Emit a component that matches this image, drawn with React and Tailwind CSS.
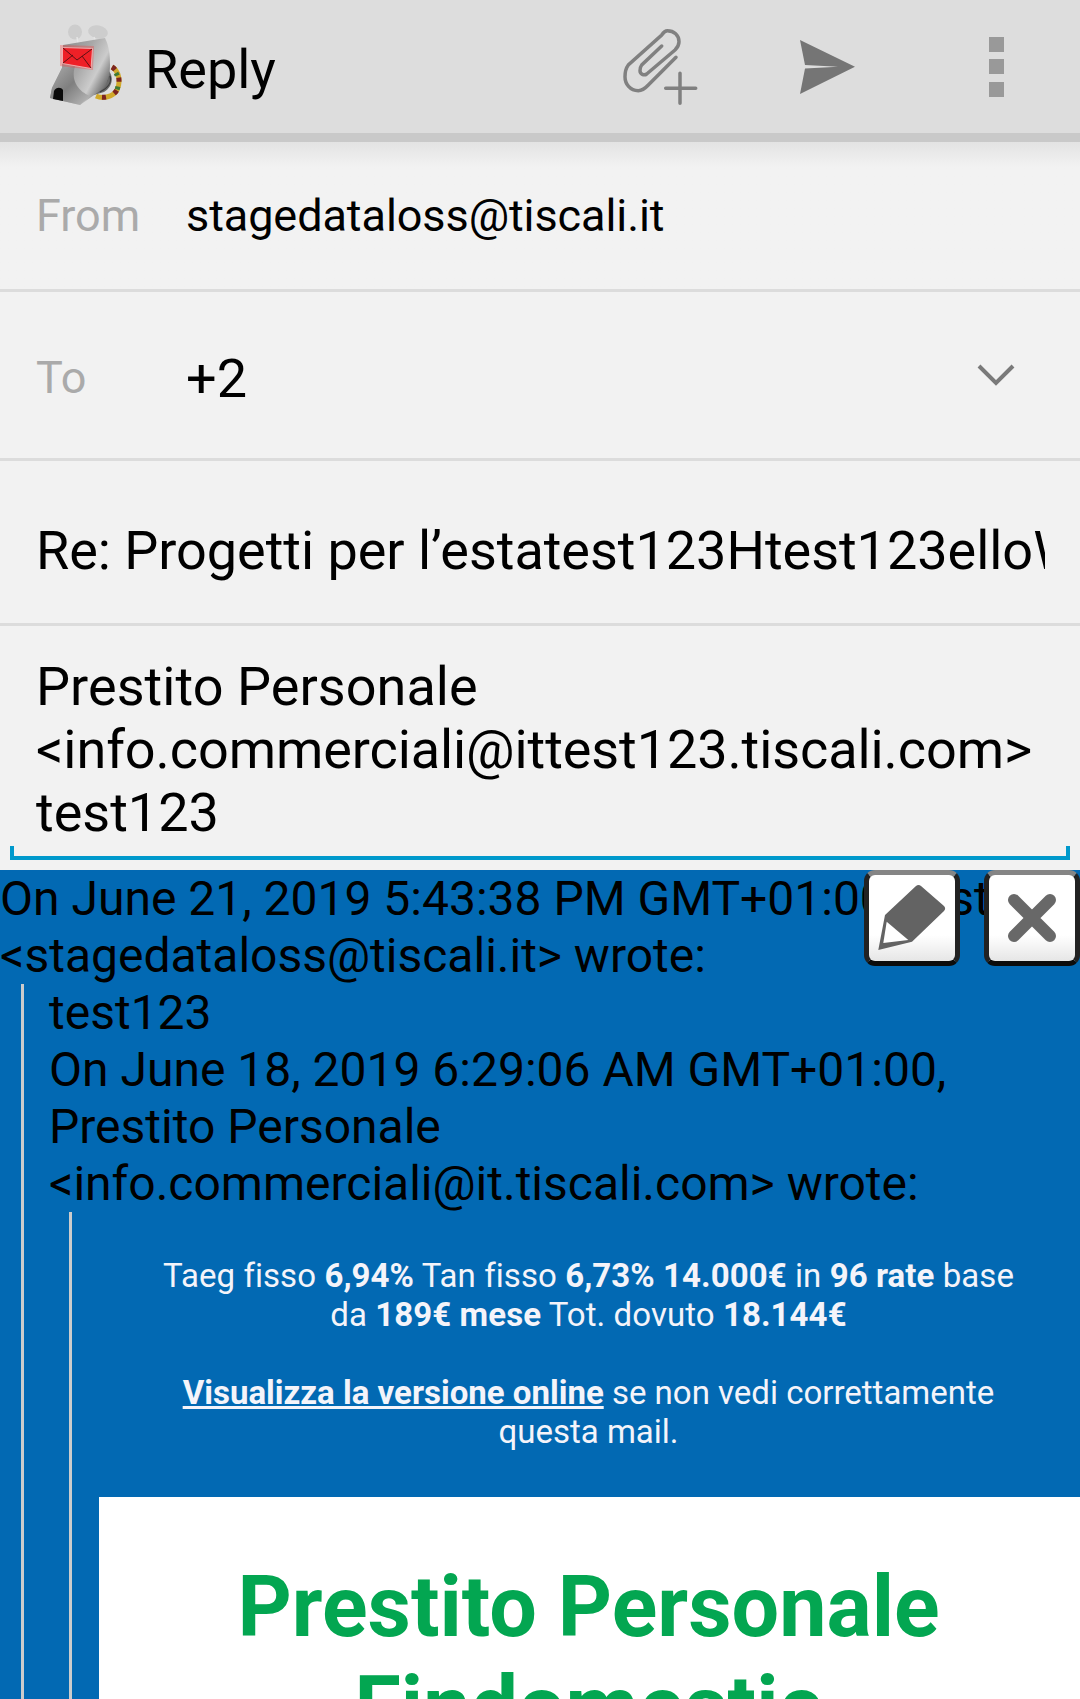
import React from "react";

const K9Logo = () => (
  <svg width="76" height="90" viewBox="0 0 76 90" className="shrink-0">
    <defs>
      <linearGradient id="k9Head" x1="0" y1="0" x2="1" y2="0.6">
        <stop offset="0" stopColor="#808080" />
        <stop offset="0.55" stopColor="#a8a8a8" />
        <stop offset="0.8" stopColor="#cccccc" />
        <stop offset="1" stopColor="#6e6e6e" />
      </linearGradient>
      <linearGradient id="k9Snout" x1="0" y1="0" x2="1" y2="1">
        <stop offset="0" stopColor="#adadad" />
        <stop offset="0.5" stopColor="#7f7f7f" />
        <stop offset="1" stopColor="#bdbdbd" />
      </linearGradient>
    </defs>
    {/* ears */}
    <ellipse cx="29" cy="10" rx="7" ry="7.5" fill="#cdcdcd" />
    <ellipse cx="52" cy="10" rx="10" ry="6.5" fill="#cdcdcd" transform="rotate(10 52 10)" />
    <path d="M31 15 L32 21 M48 15 L50 21" stroke="#e6e6e6" strokeWidth="1.5" />
    {/* neck and collar */}
    <path d="M60 46 C68 52 68 64 58 70 L48 73 L50 58 Z" fill="#6a6a6a" />
    <path d="M64 54 C66 60 62 66 54 70 M61 52 C63 58 60 62 52 67" fill="none" stroke="#3d3d3d" strokeWidth="1.3" />
    <path d="M66 45 C73 49 75 60 71 68 C67 75 57 77 50 74" fill="none" stroke="#d1a92a" strokeWidth="5" />
    <path d="M66 45 C73 49 75 60 71 68 C67 75 57 77 50 74" fill="none" stroke="#7c2420" strokeWidth="5" strokeDasharray="4 9" />
    <path d="M70 51 C73 56 73 62 71 68" fill="none" stroke="#3f7a35" strokeWidth="5" strokeDasharray="3 11" />
    <ellipse cx="59" cy="83" rx="3.5" ry="5" fill="#dddddd" />
    {/* head */}
    <path d="M17 23 L59 16 C63 24 64 32 64 43 C64 52 62 60 58 66 L34 83 L4 76 L6 66 L16 46 Z" fill="url(#k9Head)" />
    <path d="M16 46 L6 66 L4 76 L34 83 L44 74 C34 70 24 60 29 44 Z" fill="url(#k9Snout)" />
    <path d="M7 77 L8 69 C10 65 15 65 17 68 L17 79 Z" fill="#0a0a0a" />
    {/* glowing envelope eye */}
    <path d="M14 23 L48 24 L47 48 L14 44 Z" fill="#ff3030" opacity="0.3" />
    <path d="M16.5 25.5 L46.5 26.5 L45 46.5 L16.5 41.5 Z" fill="#ee2027" stroke="#f6c0c0" strokeWidth="0.8" />
    <path d="M17 26 L31 38 L46 27 M17 41 L27 33 M45 46 L36 34" fill="none" stroke="#5e1014" strokeWidth="1" />
  </svg>
);

const ClipPlus = () => (
  <svg width="80" height="80" viewBox="0 0 80 80" fill="none" stroke="#808080" strokeLinecap="round" className="mt-[3px]">
    <path
      d="M56 29.3 L28.3 57 C25 60.5 22 62.7 18.3 62.7 C10 62.7 5 56 5 48.7 C5 44 6 40 8.3 37 L41.7 7 C43 5 45 2.7 47.3 2.7 C54 2.7 59 7 59 13.7 C59 17 57.5 19.5 55 22 L26.7 46 C24 48 20 46 20 42.7 C20 40.5 20.5 38.5 21.7 37 L41.7 18"
      strokeWidth="3.5"
    />
    <path d="M60 45.3 V75.3 M45.7 60.3 H75.7" strokeWidth="3.5" />
  </svg>
);

const SendIcon = () => (
  <svg width="60" height="60" viewBox="0 0 60 60">
    <path d="M2 3 L57 29.7 L2 57 L7 31.5 L40 29.7 L7 28 Z" fill="#757575" />
  </svg>
);

const MoreIcon = () => (
  <div className="flex flex-col">
    <div className="mb-[7px] h-[15px] w-[15px] bg-[#999999]" />
    <div className="mb-[8px] h-[15px] w-[15px] bg-[#999999]" />
    <div className="h-[15px] w-[15px] bg-[#999999]" />
  </div>
);

const FloatButton = ({ children }) => (
  <div className="flex h-[96px] w-[96px] items-center justify-center rounded-[11px] border-[5px] border-x-[#222222] border-t-[#858585] border-b-[#0c0c0c] bg-gradient-to-b from-white from-70% to-[#e6e6e6]">
    {children}
  </div>
);

const Row = ({ label, value, big, chevron, height }) => (
  <div className={`${height} flex items-center border-b-[3px] border-[#dcdcdc] pl-[36px] pr-[65px]`}>
    <span className={`w-[150px] text-[45px] text-[#aaaaaa] ${big ? "pt-[5px]" : ""}`}>{label}</span>
    <span className={`flex-1 text-black ${big ? "pt-[6px] text-[54px]" : "text-[45px] tracking-[-0.08px]"}`}>{value}</span>
    {chevron && (
      <svg width="38" height="22" viewBox="0 0 38 22" fill="none" stroke="#7a7a7a" strokeWidth="4">
        <path d="M2 2 L19 19 L36 2" />
      </svg>
    )}
  </div>
);

const App = () => {
  return (
    <div className="relative h-[1699px] w-[1080px] overflow-hidden bg-[#f2f2f2] font-['Roboto',sans-serif]">
      {/* Action bar */}
      <div className="flex h-[133px] items-center bg-[#dddddd] pl-[46px]">
        <K9Logo />
        <span className="ml-[23px] pt-[6px] text-[54px] text-black">Reply</span>
        <div className="ml-auto flex items-center">
          <ClipPlus />
          <div className="ml-[98px]"><SendIcon /></div>
          <div className="ml-[131px] mr-[76px]"><MoreIcon /></div>
        </div>
      </div>
      <div className="h-[9px] bg-[#c9c9c9]" />

      <div className="bg-gradient-to-b from-[#e3e3e3] to-[#f2f2f2] to-[25px]">
        <Row label="From" value="stagedataloss@tiscali.it" height="h-[150px]" />
      </div>
      <Row label="To" value="+2" big chevron height="h-[169px]" />

      {/* Subject */}
      <div className="flex h-[165px] items-center border-b-[3px] border-[#dcdcdc] pl-[36px] pr-[35px] pt-[16px]">
        <div className="overflow-hidden whitespace-nowrap text-[54px] tracking-[-0.03px] text-black">
          Re: Progetti per l’estatest123Htest123elloWorld
        </div>
      </div>

      {/* Body editor */}
      <div className="relative h-[244px] pl-[36px] pr-[40px] pt-[29px] text-[54px] leading-[63px] text-black">
        <div className="tracking-[0.05px]">Prestito Personale</div>
        <div className="whitespace-nowrap tracking-[-0.08px]">&lt;info.commerciali@ittest123.tiscali.com&gt;</div>
        <div>test123</div>
        <div className="absolute bottom-[10px] left-[10px] right-[10px] h-[14px] border-x-4 border-b-4 border-[#0099cc]" />
      </div>

      {/* Quoted message */}
      <div className="relative h-full bg-[#0269b3]">
        <div className="text-[48px] leading-[57px] text-black">
          <div className="whitespace-nowrap">On June 21, 2019 5:43:38 PM GMT+01:00, test123</div>
          <div className="whitespace-nowrap">&lt;stagedataloss@tiscali.it&gt; wrote:</div>
          <div className="ml-[21px] border-l-[3px] border-[#cccccc] pl-[25px]">
            <div>test123</div>
            <div className="whitespace-nowrap">On June 18, 2019 6:29:06 AM GMT+01:00,</div>
            <div>Prestito Personale</div>
            <div className="whitespace-nowrap">&lt;info.commerciali@it.tiscali.com&gt; wrote:</div>
            <div className="ml-[20px] border-l-[3px] border-[#cccccc] pl-[27px]">
              <div className="pl-[49px] pr-[51px] pt-[44px] text-center text-[33px] leading-[39px] text-[#f4f4fa] [font-variant-ligatures:none]">
                <div className="tracking-[0.07px]">
                  Taeg fisso <b>6,94%</b> Tan fisso <b>6,73%</b> <b>14.000€</b> in <b>96 rate</b> base
                  <br />
                  da <b>189€</b> <b>mese</b> Tot. dovuto <b>18.144€</b>
                </div>
                <div className="mt-[39px]">
                  <a className="font-bold underline">Visualizza la versione online</a> se non vedi correttamente questa mail.
                </div>
              </div>
              <div className="mt-[46px] bg-white pr-[2px] pt-[61px] text-center text-[84.4px] font-bold leading-[100px] text-[#03a651]">
                <div>Prestito Personale</div>
                <div>Findomestic</div>
              </div>
            </div>
          </div>
        </div>

        {/* Floating edit and close buttons */}
        <div className="absolute right-0 top-0 flex gap-[24px]">
          <FloatButton>
            <svg width="72" height="72" viewBox="0 0 72 72">
              <path d="M2.3 68 L9 33 L40 4 C41.5 2.5 43.5 2.5 45 4 L68 24 C69.5 25.5 69.5 27.5 68 29 L36 59.7 Z" fill="#636363" />
              <path d="M10.7 39.7 L32.3 58 L7.3 61 Z" fill="#ffffff" />
            </svg>
          </FloatButton>
          <FloatButton>
            <svg width="50" height="50" viewBox="0 0 50 50" fill="none" stroke="#686868" strokeWidth="12" strokeLinecap="round">
              <path d="M7 7 L43 43 M43 7 L7 43" />
            </svg>
          </FloatButton>
        </div>
      </div>
    </div>
  );
};

export default App;
